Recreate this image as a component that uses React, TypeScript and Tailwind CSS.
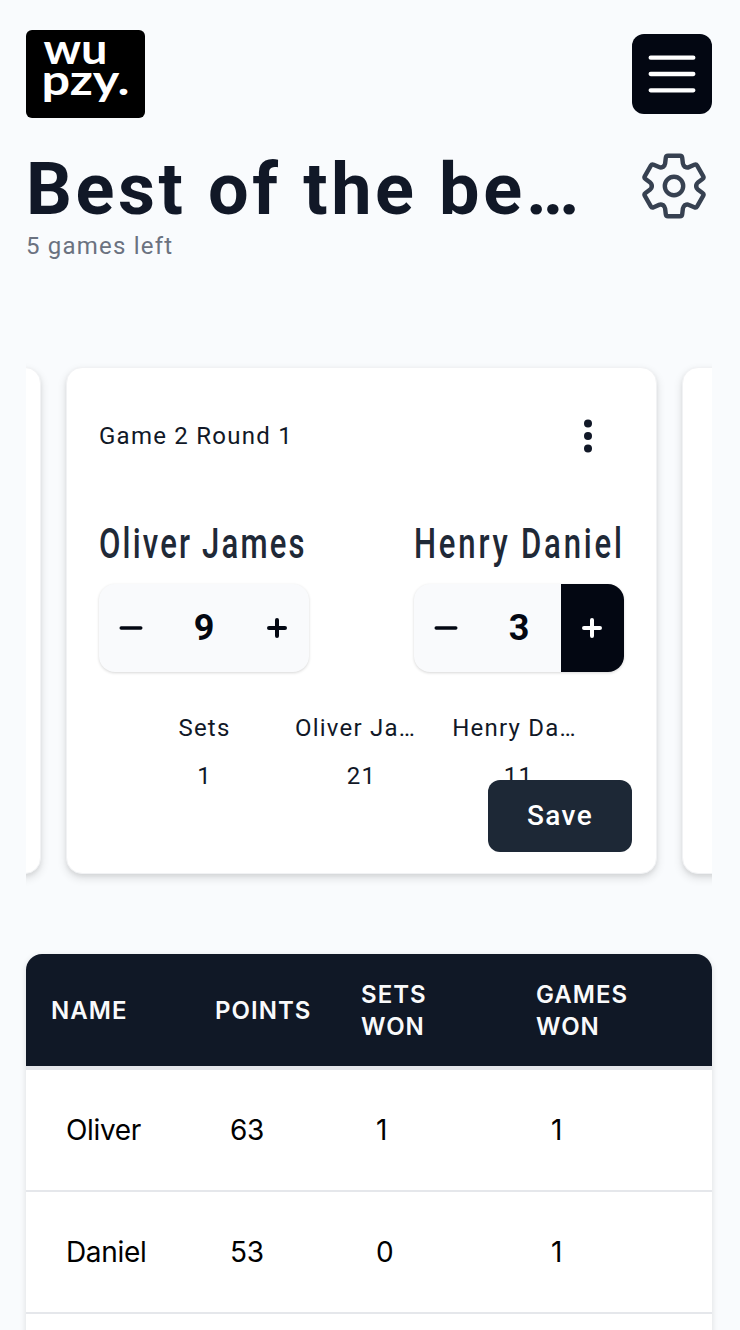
import React from "react";

const roboto = "font-['Roboto',sans-serif]";
const inter = "font-['Inter',sans-serif]";

function Logo() {
  return (
    <svg width="119" height="88" viewBox="0 0 119 88" className="rounded-md bg-black" role="img" aria-label="wupzy.">
      <g fill="#fff" className="font-['Lato',sans-serif] font-bold" fontSize="42">
        <text x="17.5" y="33.5" textLength="64" lengthAdjust="spacingAndGlyphs">wu</text>
        <text x="15.5" y="65" textLength="88" lengthAdjust="spacingAndGlyphs">pzy.</text>
      </g>
    </svg>
  );
}

function Gear() {
  const tooth =
    "M-11.1-19.2Q-9.2-20.3-8.9-22.4L-8.2-28.2Q-8-30.2-6-30.2H6Q8-30.2 8.2-28.2L8.9-22.4Q9.2-20.3 11.1-19.2";
  return (
    <svg width="66" height="66" viewBox="-33 -33 66 66" fill="none" stroke="#374151" strokeWidth="4.4" strokeLinecap="round" strokeLinejoin="round">
      {[0, 60, 120, 180, 240, 300].map((a) => (
        <path key={a} d={tooth} transform={`rotate(${a})`} />
      ))}
      <circle r="9.2" />
    </svg>
  );
}

function Minus() {
  return (
    <svg width="24" height="24" viewBox="0 0 24 24" fill="none" stroke="currentColor" strokeWidth="3.4" strokeLinecap="round">
      <path d="M2.2 12h19.6" />
    </svg>
  );
}

function Plus() {
  return (
    <svg width="24" height="24" viewBox="0 0 24 24" fill="none" stroke="currentColor" strokeWidth="4" strokeLinecap="round">
      <path d="M4 12h16M12 4v16" />
    </svg>
  );
}

function Player({ name, score, tracking, active }: { name: string; score: number; tracking: string; active?: boolean }) {
  return (
    <div className="w-[210px]">
      <div className="h-[60px] whitespace-nowrap">
        <span className={`${tracking} inline-block origin-left scale-x-[0.74] text-[42px] leading-[62px] font-medium text-[#1f2937]`}>
          {name}
        </span>
      </div>
      <div className="mt-[11px] flex h-[88px] overflow-hidden rounded-2xl bg-[#f9fafc] text-[#030712] shadow-[0_1px_3px_rgba(0,0,0,0.16)]">
        <button className="flex w-[63px] items-center justify-center"><Minus /></button>
        <div className="flex flex-1 items-center justify-center text-4xl font-bold">{score}</div>
        <button className={active ? "flex w-[63px] items-center justify-center bg-[#030712] pr-[2px] text-white" : "flex w-[63px] items-center justify-center pr-[2px]"}>
          <Plus />
        </button>
      </div>
    </div>
  );
}

const cardBox =
  "h-[507px] shrink-0 rounded-2xl border border-[#f1f2f4] bg-white shadow-[0_4px_10px_rgba(0,0,0,0.12),0_2px_4px_rgba(0,0,0,0.06)]";

function Card() {
  return (
    <section className={`${cardBox} flex w-[591px] flex-col pt-[48px] pr-[24px] pl-[32px]`}>
      <div className="flex h-10 items-center justify-between pr-[32px]">
        <span className="text-2xl tracking-[0.052em]">Game 2 Round 1</span>
        <svg width="24" height="40" viewBox="0 0 24 40" fill="#111827">
          <circle cx="12" cy="7.5" r="4" />
          <circle cx="12" cy="20" r="4" />
          <circle cx="12" cy="32.5" r="4" />
        </svg>
      </div>
      <div className="mt-[57px] flex justify-between pr-[8px]">
        <Player name="Oliver James" score={9} tracking="tracking-[0.07em]" />
        <Player name="Henry Daniel" score={3} tracking="tracking-[0.09em]" active />
      </div>
      <div className="mt-[32px] grid grid-cols-[157px_157px_157px] grid-rows-[48px_48px] pl-[27px] text-center text-2xl leading-[48px] tracking-[0.05em]">
        <span>Sets</span>
        <span className="pr-3">Oliver Ja…</span>
        <span className="pr-2">Henry Da…</span>
        <span>1</span>
        <span>21</span>
        <span>11</span>
      </div>
      <button className="relative z-10 -mt-[20px] h-[72px] w-[144px] shrink-0 self-end rounded-xl bg-[#1d2836] text-[28px] font-medium tracking-[0.05em] text-white">
        Save
      </button>
    </section>
  );
}

const rows = [
  ["Oliver", "63", "1", "1"],
  ["Daniel", "53", "0", "1"],
];

const cols = "grid grid-cols-[164px_146px_175px_1fr]";

export default function App() {
  return (
    <div className={`${roboto} h-[1330px] overflow-hidden bg-[#f9fbfd] pt-[30px] pr-[28px] pl-[26px] text-[#111827]`}>
      <header className="flex h-[88px] w-full items-center justify-between">
        <Logo />
        <button className="flex h-20 w-20 items-center justify-center rounded-xl bg-[#030712]">
          <svg width="64" height="64" viewBox="0 0 24 24" fill="none" stroke="#fff" strokeWidth="1.6" strokeLinecap="round">
            <path d="M4 5.9h16M4 12h16M4 18.1h16" />
          </svg>
        </button>
      </header>

      <div className="mt-[32px] flex h-[72px] items-center justify-between pr-[5px]">
        <h1 className="pt-[8px] text-[72px] leading-[72px] font-bold tracking-[0.05em] whitespace-nowrap">Best of the be…</h1>
        <Gear />
      </div>
      <p className="mt-[8px] text-2xl leading-8 tracking-[0.05em] text-[#6b7280]">5 games left</p>

      <div className="mt-[95px] flex h-[547px] justify-center gap-[25px] overflow-hidden pt-[10px] pr-[15px]">
        <div className={`${cardBox} w-[592px]`} />
        <Card />
        <div className={`${cardBox} w-[592px]`} />
      </div>

      <div className={`${inter} mt-[50px] overflow-hidden rounded-t-2xl bg-white shadow-[0_2px_6px_rgba(0,0,0,0.12)]`}>
        <div className={`${cols} h-[112px] items-center bg-[#101826] pt-[2px] pl-[25px] text-2xl leading-8 font-semibold tracking-[0.043em] text-[#f9fafb]`}>
          <span>NAME</span>
          <span>POINTS</span>
          <span>SETS<br />WON</span>
          <span>GAMES<br />WON</span>
        </div>
        <div className="border-t-4 border-[#e5e7eb]">
          {rows.map((row) => (
            <div key={row[0]} className={`${cols} h-[122px] items-center border-b-2 border-[#e5e7eb] pl-[40px] text-[28px] tracking-[-0.012em] text-black`}>
              {row.map((cell, i) => (
                <span key={i}>{cell}</span>
              ))}
            </div>
          ))}
          <div className="h-[122px]" />
        </div>
      </div>
    </div>
  );
}
